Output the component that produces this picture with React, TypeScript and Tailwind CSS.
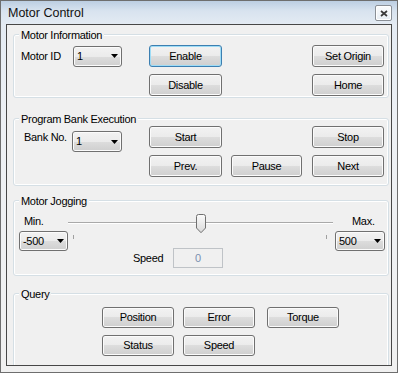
import React from "react";

const grad =
  "bg-[linear-gradient(180deg,#f2f2f2_0%,#ebebeb_50%,#dddddd_50%,#cfcfcf_100%)]";

function Btn({
  label,
  className = "",
  focus = false,
}: {
  label: string;
  className?: string;
  focus?: boolean;
}) {
  return (
    <div
      className={`flex shrink-0 items-center justify-center rounded-[3px] border ${grad} text-[11px] leading-none tracking-[-0.3px] text-black ${
        focus
          ? "border-[#3c7fb1] shadow-[inset_0_0_0_1px_#9edcf6]"
          : "border-[#707070] shadow-[inset_0_0_0_1px_#fbfbfb]"
      } ${className}`}
    >
      {label}
    </div>
  );
}

function Combo({ value, className = "" }: { value: string; className?: string }) {
  return (
    <div
      className={`flex shrink-0 items-center justify-between rounded-[3px] border border-[#707070] ${grad} pl-[3px] pr-[3px] text-[11px] leading-none tracking-[-0.3px] text-black shadow-[inset_0_0_0_1px_#fbfbfb] ${className}`}
    >
      <span>{value}</span>
      <svg width="7" height="4" viewBox="0 0 7 4">
        <path d="M0 0H7L3.5 4Z" fill="#000" />
      </svg>
    </div>
  );
}

function Group({
  title,
  className = "",
  children,
}: {
  title: string;
  className?: string;
  children?: React.ReactNode;
}) {
  return (
    <div
      className={`ml-[6px] w-[376px] shrink-0 rounded-[3px] border border-[#d5dfe5] shadow-[inset_0_0_0_1px_#ffffff] ${className}`}
    >
      <div className="-mt-[7px] ml-[5px] w-fit bg-[#f0f0f0] px-[2px] text-[11px] leading-[14px] tracking-[-0.3px] text-black">
        {title}
      </div>
      {children}
    </div>
  );
}

export default function App() {
  return (
    <div className="flex h-[373px] w-[398px] flex-col border border-[#6e6e6e] bg-[linear-gradient(180deg,#bccee2_0px,#d8e3ef_10px,#e4ebf3_24px,#edf0f4_120px,#f0f0f0_100%)] font-['Liberation_Sans',Arial,sans-serif] text-black">
      {/* Title bar */}
      <div className="flex h-[23px] shrink-0 items-start justify-between">
        <div className="pl-[7px] text-[12.5px] leading-[24px] text-[#111]">Motor Control</div>
        <div className="mr-[5px] mt-[4px] flex h-[16px] w-[17px] items-center justify-center rounded-[2px] border border-[#8a8f96] bg-[linear-gradient(180deg,#fbfcfd_0%,#e8eef4_100%)] shadow-[inset_0_0_0_1px_#ffffff]">
          <svg width="8" height="7" viewBox="0 0 8 7">
            <path d="M1 1L7 6M7 1L1 6" stroke="#3a3a3a" strokeWidth="1.7" />
          </svg>
        </div>
      </div>

      {/* Client area */}
      <div className="mx-[5px] flex h-[342px] shrink-0 flex-col overflow-hidden border border-[#474747] bg-[#f0f0f0] text-[11px] tracking-[-0.3px]">
        {/* Motor Information */}
        <Group title="Motor Information" className="mt-[9px] h-[64px]">
          <div className="mt-[3px] flex h-[22px] items-center">
            <div className="flex w-[135px] items-center pl-[7px]">
              <span className="w-[52px]">Motor ID</span>
              <Combo value="1" className="h-[21px] w-[49px]" />
            </div>
            <Btn label="Enable" focus className="h-[22px] w-[73px]" />
            <Btn label="Set Origin" className="ml-[90px] h-[22px] w-[72px]" />
          </div>
          <div className="mt-[7px] flex h-[22px]">
            <Btn label="Disable" className="ml-[135px] h-[22px] w-[73px]" />
            <Btn label="Home" className="ml-[90px] h-[22px] w-[72px]" />
          </div>
        </Group>

        {/* Program Bank Execution */}
        <Group title="Program Bank Execution" className="mt-[20px] h-[68px]">
          <div className="flex">
            <div className="mt-[4px] flex w-[135px] items-start self-start pl-[10px]">
              <span className="w-[48px] leading-[14px]">Bank No.</span>
              <Combo value="1" className="mt-[1px] h-[21px] w-[50px]" />
            </div>
            <div className="flex flex-col gap-[7px]">
              <div className="flex">
                <Btn label="Start" className="h-[22px] w-[73px]" />
                <Btn label="Stop" className="ml-[90px] h-[22px] w-[72px]" />
              </div>
              <div className="flex">
                <Btn label="Prev." className="h-[22px] w-[73px]" />
                <Btn label="Pause" className="ml-[9px] h-[22px] w-[71px]" />
                <Btn label="Next" className="ml-[10px] h-[22px] w-[72px]" />
              </div>
            </div>
          </div>
        </Group>

        {/* Motor Jogging */}
        <Group title="Motor Jogging" className="mt-[14px] h-[76px]">
          <div className="flex">
            <div className="flex w-[54px] flex-col pl-[5px]">
              <span className="ml-[5px] mt-[6px] leading-[14px]">Min.</span>
              <Combo value="-500" className="mt-[3px] h-[20px] w-[49px]" />
            </div>
            <div className="flex w-[265px] flex-col">
              <svg width="265" height="32" viewBox="0 0 265 32">
                <defs>
                  <linearGradient id="thumb" x1="0" y1="0" x2="0" y2="1">
                    <stop offset="0" stopColor="#fbfbfb" />
                    <stop offset="1" stopColor="#d9d9d9" />
                  </linearGradient>
                </defs>
                <rect x="0" y="14" width="265" height="1" fill="#a9a9a9" />
                <rect x="0" y="15" width="265" height="1" fill="#ffffff" />
                <path
                  d="M128.5 8.5Q128.5 6.5 130.5 6.5H135.5Q137.5 6.5 137.5 8.5V20L133 24.7L128.5 20Z"
                  fill="url(#thumb)"
                  stroke="#707070"
                  strokeWidth="1"
                />
                <rect x="5" y="27" width="1" height="4" fill="#a0a0a0" />
                <rect x="258" y="27" width="1" height="4" fill="#a0a0a0" />
              </svg>
              <div className="mt-[8px] flex h-[20px] items-center">
                <span className="ml-[65px] w-[40px]">Speed</span>
                <div className="flex h-[20px] w-[50px] items-center justify-center border border-[#bfc3c7] bg-[#f0f0f0] text-[#7a8fb0]">
                  0
                </div>
              </div>
            </div>
            <div className="flex w-[52px] flex-col pl-[2px]">
              <span className="ml-[17px] mt-[6px] leading-[14px]">Max.</span>
              <Combo value="500" className="mt-[3px] h-[20px] w-[50px]" />
            </div>
          </div>
        </Group>

        {/* Query */}
        <Group title="Query" className="mt-[17px] h-[80px]">
          <div className="mt-[6px] flex flex-col gap-[7px] pl-[88px]">
            <div className="flex">
              <Btn label="Position" className="h-[21px] w-[72px]" />
              <Btn label="Error" className="ml-[9px] h-[21px] w-[72px]" />
              <Btn label="Torque" className="ml-[12px] h-[21px] w-[72px]" />
            </div>
            <div className="flex">
              <Btn label="Status" className="h-[21px] w-[72px]" />
              <Btn label="Speed" className="ml-[9px] h-[21px] w-[72px]" />
            </div>
          </div>
        </Group>
      </div>
    </div>
  );
}
